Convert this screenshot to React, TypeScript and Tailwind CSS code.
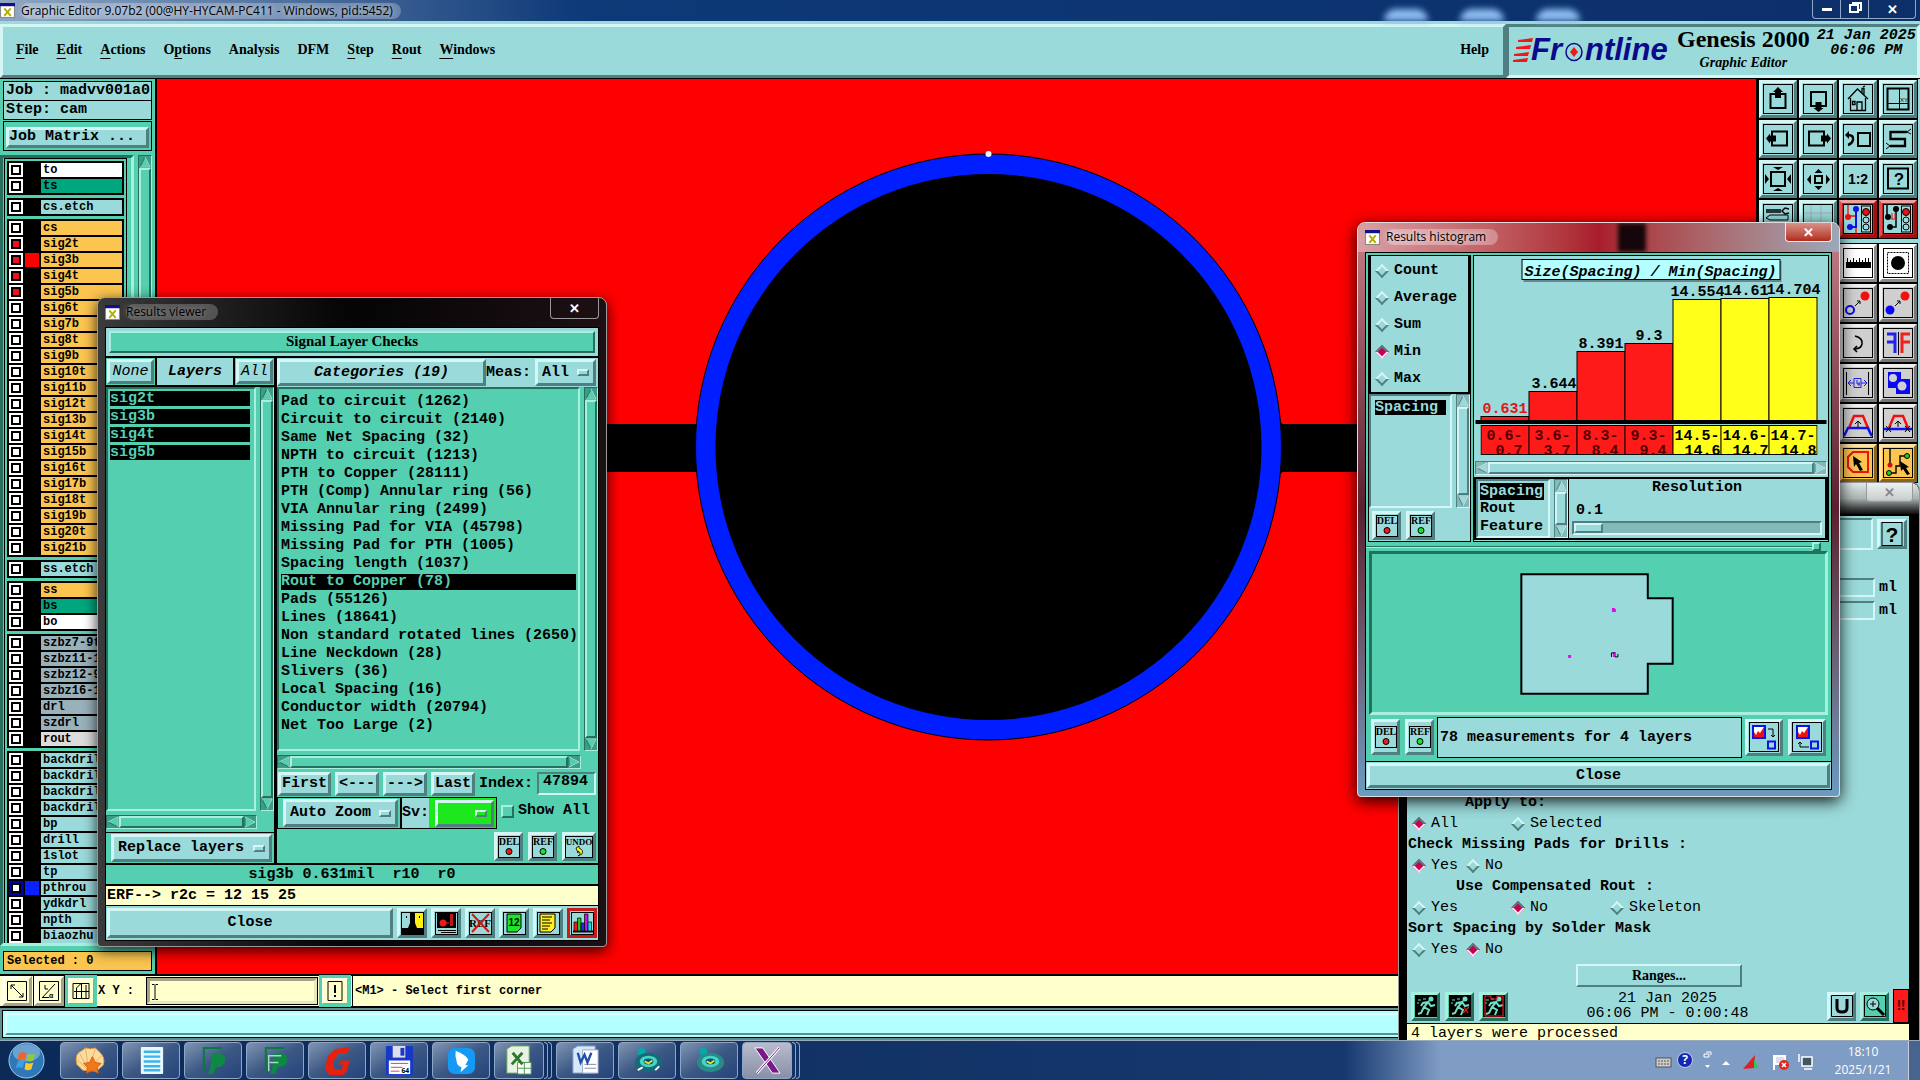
import type { ReactNode } from "react";

const MONO = "font-['Liberation_Mono',monospace]";
const SERIF = "font-['Liberation_Serif',serif]";
const UI = "font-['Open_Sans',sans-serif]";

// Motif style bevels
const UP = "border-t-[#d4f6f4] border-l-[#d4f6f4] border-b-[#4f7f80] border-r-[#4f7f80]";
const DOWN = "border-t-[#4f7f80] border-l-[#4f7f80] border-b-[#d4f6f4] border-r-[#d4f6f4]";
const GREEN_UP = "border-t-[#a9efdd] border-l-[#a9efdd] border-b-[#24705d] border-r-[#24705d]";
const GREEN_DOWN = "border-t-[#24705d] border-l-[#24705d] border-b-[#a9efdd] border-r-[#a9efdd]";

type Tone = "green" | "cyan";

function Arrow({ d, tone }: { d: "up" | "down" | "left" | "right"; tone: Tone }) {
  const points = { up: "6,1 11,11 1,11", down: "1,1 11,1 6,11", left: "1,6 11,1 11,11", right: "1,1 11,6 1,11" };
  return (
    <svg viewBox="0 0 12 12" className="size-3 shrink-0">
      <polygon points={points[d]} fill={tone === "green" ? "#54cfb0" : "#9bdada"} stroke={tone === "green" ? "#24705d" : "#4f7f80"} />
      <polyline points={points[d]} fill="none" stroke={tone === "green" ? "#a9efdd" : "#d4f6f4"} />
    </svg>
  );
}

function ScrollBar({ vertical, tone = "green", className = "" }: { vertical?: boolean; tone?: Tone; className?: string }) {
  const trough = tone === "green" ? `bg-[#3a9e86] ${GREEN_DOWN}` : `bg-[#84b9b9] ${DOWN}`;
  const thumb = tone === "green" ? `bg-[#54cfb0] ${GREEN_UP}` : `bg-[#9bdada] ${UP}`;
  return (
    <div className={`flex shrink-0 border ${trough} ${vertical ? "w-[14px] flex-col" : "h-[14px]"} ${className}`}>
      <Arrow d={vertical ? "up" : "left"} tone={tone} />
      <div className={`flex-1 border-2 ${thumb}`}></div>
      <Arrow d={vertical ? "down" : "right"} tone={tone} />
    </div>
  );
}

function Diamond({ name, label, checked, className = "" }: { name: string; label: string; checked?: boolean; className?: string }) {
  return (
    <label className={`flex items-center gap-[7px] ${className}`}>
      <input
        type="radio"
        name={name}
        defaultChecked={checked}
        className="size-[10px] shrink-0 rotate-45 appearance-none border-2 border-t-[#d4f6f4] border-l-[#d4f6f4] border-b-[#4f7f80] border-r-[#4f7f80] checked:border-t-[#4f7f80] checked:border-l-[#4f7f80] checked:border-b-[#f4e8f8] checked:border-r-[#f4e8f8] checked:bg-[#c8004f]"
      />
      {label}
    </label>
  );
}

function Option({ label, name, className = "" }: { label: string; name: string; className?: string }) {
  return (
    <span className={`flex items-center border-[3px] px-1 ${UP} ${className}`}>
      <select aria-label={name} className="min-w-0 flex-1 appearance-none bg-transparent font-bold">
        <option>{label}</option>
      </select>
      <span className={`h-[7px] w-3 shrink-0 border-2 ${UP}`}></span>
    </span>
  );
}

function XIcon() {
  return (
    <svg viewBox="0 0 14 14" className="size-[15px] shrink-0">
      <rect x="0.5" y="0.5" width="13" height="13" fill="#fff" stroke="#888" />
      <rect x="0" y="0" width="14" height="3" fill="#10108a" />
      <path d="M4 5l6 7M10 5l-6 7" stroke="#b5ae00" strokeWidth="1.8" />
    </svg>
  );
}

// Small bevelled button with a word above a coloured lamp
function LampButton({ word, fill, tall }: { word: string; fill?: string; tall?: boolean }) {
  return (
    <button aria-label={word} className={`flex items-center justify-center border-[3px] bg-[#9bdada] ${UP} ${word === "UNDO" ? "w-[34px]" : "w-[29px]"} ${tall ? "h-9" : "h-[29px]"}`}>
      <svg viewBox="0 0 22 22" className="size-[22px] overflow-visible">
        <rect x={fill ? 0.5 : -2.5} y="0.5" width={fill ? 21 : 27} height="21" fill="none" stroke="#000" />
        <text x="11" y="9" fontSize={fill ? 10 : 9} textAnchor="middle" fontFamily="Liberation Serif">{word}</text>
        {fill ? (
          <circle cx="11" cy="15.5" r="3" fill={fill} stroke="#000" />
        ) : (
          <path d="M8 12l3-2v2q5 2 3 6l-4 2q4-3 0-5v2z" fill="#ffee20" stroke="#000" strokeWidth="0.8" />
        )}
      </svg>
    </button>
  );
}

function Pic({ children, fill = "none" }: { children?: ReactNode; fill?: string }) {
  return (
    <svg viewBox="0 0 30 30" className="size-[30px]">
      <rect x="0.5" y="0.5" width="29" height="29" fill={fill} stroke="#000" />
      {children}
    </svg>
  );
}

const navTools: [string, ReactNode][] = [
  ["Pan up", <Pic><rect x="7.5" y="10" width="15" height="14" fill="none" stroke="#000" strokeWidth="2" /><path d="M15 3l5 5h-2v6h-6V8h-2z" /></Pic>],
  ["Pan down", <Pic><rect x="8" y="8" width="15" height="14" fill="none" stroke="#000" strokeWidth="2" /><path d="M15.500 28l5-4h-2v-6h-6v6h-2z" /></Pic>],
  ["Home", <Pic><path d="M5 15L14.500 5 25 15M7.500 14v12.500h15V14M14 26v-8h5v8M9.500 17.500h2.500v3h-2.500zM19 9V4.500h2v6M20 3l2-1" fill="none" stroke="#000" strokeWidth="1.300" /></Pic>],
  ["Zoom window", <Pic><rect x="4.500" y="4.500" width="21" height="21" fill="none" stroke="#000" strokeWidth="2" /><path d="M16.500 5v20M5 19.500h20" stroke="#000" /><text x="17" y="18" fontSize="6" fontFamily="Liberation Sans">XY</text></Pic>],
  ["Pan left", <Pic><rect x="9" y="7.500" width="15" height="14" fill="none" stroke="#000" strokeWidth="2" /><path d="M3 14.500l4-5v2h6v6H7v2z" /></Pic>],
  ["Pan right", <Pic><rect x="6" y="7.500" width="15" height="14" fill="none" stroke="#000" strokeWidth="2" /><path d="M28 14.500l-4-5v2h-6v6h6v2z" /></Pic>],
  ["Previous view", <Pic><rect x="15" y="9" width="12" height="13" fill="none" stroke="#000" strokeWidth="2" /><path d="M5 11q6 0 5 5-1 4-5 5" fill="none" stroke="#000" strokeWidth="2.500" /><path d="M2 11l4-4v8z" /></Pic>],
  ["Net path", <Pic><path d="M24 8H7.500v7H22v7H7" fill="none" stroke="#000" strokeWidth="2.300" /><path d="M24 8l4-3m-4 3l4 2M7 22l-4-3m4 3l-4 3" stroke="#000" /></Pic>],
  ["Zoom out", <Pic><rect x="8" y="8" width="14" height="14" fill="none" stroke="#000" strokeWidth="2" /><path d="M15 6l-5-3h10zM15 24l-5 3h10zM6 15l-4-5v10zM24 15l4-5v10z" /></Pic>],
  ["Zoom in", <Pic><rect x="12" y="12" width="7" height="7" fill="none" stroke="#000" strokeWidth="2" /><path d="M15.500 5l-4 4h8zM15.500 26l-4-4h8zM4 15.500l4-5v10zM27 15.500l-4-5v10z" /></Pic>],
  ["Scale", <Pic><text x="15" y="20" fontSize="14" fontWeight="bold" textAnchor="middle" fontFamily="Liberation Sans">1:2</text></Pic>],
  ["Query", <Pic><rect x="5" y="4.500" width="20" height="20" fill="none" stroke="#000" strokeWidth="2" /><text x="16" y="21" fontSize="17" fontWeight="bold" textAnchor="middle" fontFamily="Liberation Sans">?</text></Pic>],
  ["Setup", <Pic><path d="M3 6h15M3 8h15M26 5l-4-1-3 3 3 3 4-1" fill="none" stroke="#000" strokeWidth="1.500" /><path d="M3 14l4-3h18v5H7z" fill="none" stroke="#000" /></Pic>],
  ["Grid", <Pic><path d="M8 1v28M18 1v28M1 9h28M1 19h28" stroke="#a9a9b5" /></Pic>],
  ["Net on", <Pic><path d="M5 1v11h8v17" fill="none" stroke="#f01010" strokeWidth="1.300" /><path d="M13 5v18H8" fill="none" stroke="#1010e8" strokeWidth="2" /><circle cx="13" cy="5" r="3" fill="#1010e8" /><circle cx="5" cy="13" r="3" fill="#f01010" /><circle cx="7" cy="23" r="3" fill="#1010e8" /><rect x="18.500" y="2" width="9" height="26" fill="#9bdada" stroke="#000" /><circle cx="23" cy="8" r="3.500" fill="#f01010" stroke="#000" /><circle cx="23" cy="16" r="3" fill="none" stroke="#000" /><circle cx="23" cy="23" r="3" fill="none" stroke="#000" /></Pic>],
  ["Net off", <Pic><path d="M4 1v12M13 5v18H8" fill="none" stroke="#000" strokeWidth="1.500" /><circle cx="13" cy="5" r="3" /><circle cx="5" cy="13" r="3" /><circle cx="7" cy="23" r="3" /><path d="M9 9v6m3-6v6m-4 0h5" stroke="#f01010" /><rect x="18.500" y="2" width="9" height="26" fill="#9bdada" stroke="#000" /><circle cx="23" cy="8" r="3.500" fill="#f01010" stroke="#000" /><circle cx="23" cy="16" r="3" fill="none" stroke="#000" /><circle cx="23" cy="23" r="3" fill="none" stroke="#000" /></Pic>],
];

const editTools: [string, string, ReactNode][] = [
  ["Measure", "white", <Pic fill="#fff"><path d="M3 14h25v6H3z" /><path d="M4.500 10v5M7.500 12v3M10.500 10v5M13.500 12v3M16.500 10v5M19.500 12v3M22.500 10v5M25.500 10v5" stroke="#000" /></Pic>],
  ["Select feature", "white", <Pic fill="#fff"><rect x="4.500" y="4.500" width="21" height="21" fill="none" stroke="#000" strokeDasharray="2 1" /><circle cx="15" cy="15" r="7" /></Pic>],
  ["Copy feature", "gray", <Pic><circle cx="7" cy="22" r="4" fill="none" stroke="#0a0af0" strokeWidth="2" /><circle cx="22" cy="8" r="4.500" fill="#f01010" /><path d="M12 18l5-5m-3 0h3v3" fill="none" stroke="#000" /></Pic>],
  ["Move feature", "gray", <Pic><circle cx="7" cy="22" r="4.500" fill="#0a0af0" /><circle cx="22" cy="8" r="4.500" fill="#f01010" /><path d="M12 18l5-5m-3 0h3v3" fill="none" stroke="#000" /></Pic>],
  ["Rotate", "gray", <Pic><path d="M12 8q8 2 7 8-1 5-8 5m3-3l-3 3 3 3" fill="none" stroke="#000" strokeWidth="1.600" /></Pic>],
  ["Mirror", "gray", <Pic><path d="M4 6h8v19M4 14h8" fill="none" stroke="#2020f0" strokeWidth="3" /><path d="M27 6h-8v19M27 14h-8" fill="none" stroke="#f02020" strokeWidth="3" /><path d="M15.500 4v23" stroke="#000" /></Pic>],
  ["Stretch", "gray", <Pic><path d="M3.500 4v23M25.500 4v23" stroke="#000" /><path d="M5 15h6M24 15h-6M8 12l-3 3 3 3M21 12l3 3-3 3M11 10.500h7v9h-7zM14 12v4h3m-1-2v4" fill="none" stroke="#2020e0" /></Pic>],
  ["Combine", "gray", <Pic><path d="M5 4h13v7h9v15H13v-6H5z" fill="#0a0af0" /><circle cx="10" cy="10" r="4" fill="#d0d0d0" /><circle cx="19" cy="18" r="4.500" fill="#d0d0d0" /></Pic>],
  ["Widen", "gray", <Pic><path d="M6 20L11 8h9l5 12" fill="none" stroke="#f01010" strokeWidth="2.500" /><path d="M1 28q3-6 4-8h20q1 3 4 8" fill="none" stroke="#1010f0" strokeWidth="2.500" /><path d="M15 19v-6m-3 3l3-3 3 3" fill="none" stroke="#000" /></Pic>],
  ["Narrow", "gray", <Pic><path d="M6 20L11 8h9l5 12" fill="none" stroke="#f01010" strokeWidth="2.500" /><path d="M1 21h28" stroke="#1010f0" strokeWidth="2.500" /><path d="M15 19v-6m-3 3l3-3 3 3M3 18l5 6m0-6l-5 6M22 18l5 6m0-6l-5 6" fill="none" stroke="#000" /></Pic>],
  ["Select polygon", "orange", <Pic><path d="M10 4h15v20H10l-5-5V9z" fill="none" stroke="#f01010" strokeWidth="2" /><path d="M10 8l9 6-3 1 4 7-3 1-4-7-2 3z" /></Pic>],
  ["Select net", "orange", <Pic><path d="M7 1v15M6 25h7v-7h4V8h8" fill="none" stroke="#000" strokeWidth="1.400" /><circle cx="7" cy="17" r="2.500" fill="#d01010" /><circle cx="6" cy="25" r="2.500" fill="#20d020" stroke="#000" /><circle cx="24" cy="8" r="2.500" fill="#20d020" stroke="#000" /><path d="M17 13l9 6-3 1 4 6-3 1-4-6-2 2z" /></Pic>],
];

const toolColors: Record<string, string> = {
  white: "bg-white border-t-white border-l-white border-b-[#8a8a8a] border-r-[#8a8a8a]",
  gray: "bg-[#cfcfcf] border-t-[#efefef] border-l-[#efefef] border-b-[#777] border-r-[#777]",
  orange: "bg-[#fcc54f] border-t-[#ffe3a0] border-l-[#ffe3a0] border-b-[#8a6416] border-r-[#8a6416]",
};

const layerColors: Record<string, string> = {
  white: "bg-white",
  mask: "bg-[#00a67d]",
  misc: "bg-[#9bdada]",
  signal: "bg-[#fcc54f]",
  drill: "bg-[#98b1ba]",
  rout: "bg-[#dcdcdc]",
};

const inner = Array.from({ length: 20 }, (_, i) => `sig${i + 2}${i % 2 ? "b" : "t"}:signal`);

const layerGroups = [
  ["to:white", "ts:mask"],
  ["cs.etch:misc"],
  ["cs:signal", ...inner],
  ["ss.etch:misc"],
  ["ss:signal", "bs:mask", "bo:white"],
  ["szbz7-9t:drill", "szbz11-1:drill", "szbz12-9:drill", "szbz16-1:drill", "drl:drill", "szdrl:drill", "rout:rout"],
  ["backdril:misc", "backdril:misc", "backdril:misc", "backdril:misc", "bp:misc", "drill:misc", "1slot:misc", "tp:misc", "pthrou:misc", "ydkdrl:misc", "npth:misc", "biaozhu:misc", "ddd:misc"],
];

function LayerRow({ item }: { item: string }) {
  const [name, kind] = item.split(":");
  const affected = ["sig2t", "sig3b", "sig4t", "sig5b"].includes(name);
  const swatch = name === "sig3b" ? "bg-[#ff0000]" : name === "pthrou" ? "bg-[#0a20ff]" : "bg-black";
  return (
    <label className="mb-0.5 flex h-3.5 items-center">
      <span className={`flex size-3.5 items-center justify-center ${name === "pthrou" ? "bg-[#0000a8]" : "bg-white"}`}>
        <input type="checkbox" defaultChecked={affected} className="size-2.5 appearance-none border-2 border-black bg-white checked:bg-[#f01018]" />
      </span>
      <span className={`ml-0.5 h-3.5 w-[14px] ${swatch}`}></span>
      <span className={`ml-0.5 h-3.5 flex-1 overflow-hidden whitespace-nowrap pl-0.5 leading-[14px] ${layerColors[kind]}`}>{name}</span>
    </label>
  );
}

function Sidebar() {
  return (
    <aside className={`flex w-[157px] shrink-0 flex-col border-r-2 border-black bg-[#54cfb0] font-bold ${MONO}`}>
      <div className="mx-[3px] mt-0.5 h-5 border border-black bg-[#9bdada] pl-0.5 text-[15px] leading-[18px]">Job : madvv001a0</div>
      <div className="mx-[3px] h-[19px] border border-t-0 border-black bg-[#9bdada] pl-0.5 text-[15px] leading-[18px]">Step: cam</div>
      <div className="mx-[3px] mt-px border border-black p-0.5">
        <button className={`h-[21px] w-full border-[3px] bg-[#9bdada] text-left text-[15px] leading-[14px] ${UP}`}>Job Matrix ...</button>
      </div>
      <div className="mt-1 flex min-h-0 flex-1 gap-1 overflow-hidden pr-[3px]">
        <div className={`flex-1 overflow-hidden border-[3px] pl-px pr-1 ${GREEN_DOWN}`}>
          <div className="flex flex-col gap-[3px] border border-black px-0.5 pt-0.5 text-[12px]">
            {layerGroups.map((group, g) => (
              <div key={g} className="bg-black px-0.5 pt-0.5">
                {group.map((item, i) => (
                  <LayerRow key={i} item={item} />
                ))}
              </div>
            ))}
          </div>
        </div>
        <ScrollBar vertical />
      </div>
      <div className="mx-[3px] mb-[3px] mt-[5px] h-5 border border-black bg-[#fcc54f] pl-[3px] text-[12px] leading-[18px]">Selected : 0</div>
    </aside>
  );
}

const menus = [
  ["", "F", "ile"], ["", "E", "dit"], ["", "A", "ctions"], ["O", "p", "tions"], ["Analysis", "", ""],
  ["DFM", "", ""], ["", "S", "tep"], ["", "R", "out"], ["", "W", "indows"],
];

function Header() {
  return (
    <header className="flex h-[57px] shrink-0 border-b border-black bg-[#9bdada] pt-0.5">
      <nav className={`flex flex-1 items-center border-[3px] pb-1 pl-[13px] pr-[14px] text-[14px] font-bold ${UP} ${SERIF}`}>
        <div className="flex gap-[18px]">
          {menus.map(([a, b, c]) => (
            <button key={a + b + c}>
              {a}
              <span className="underline underline-offset-4">{b}</span>
              {c}
            </button>
          ))}
        </div>
        <button className="ml-auto">Help</button>
      </nav>
      <div className={`flex w-[414px] items-center border-[3px] pb-1 pl-1 ${DOWN}`}>
        <svg viewBox="0 0 160 32" className="h-8 w-40 shrink-0 overflow-visible">
          <path d="M5 7l15-2-1 4H5zM3 14l15-2-1 4H3zM1 21l15-2-1 4H1zM0 27l15-2-1 4H0z" fill="#f01818" />
          <text x="18" y="27" fontSize="31" fontWeight="bold" fontStyle="italic" fill="#0a0a8a" fontFamily="Liberation Sans">Fr</text>
          <ellipse cx="61" cy="19" rx="8" ry="8.500" fill="none" stroke="#0a0a8a" strokeWidth="1.500" />
          <path d="M61 14l4 5-4 5-4-5z" fill="#f01818" />
          <text x="72" y="27" fontSize="31" fontWeight="bold" fontStyle="italic" fill="#0a0a8a" fontFamily="Liberation Sans">ntline</text>
        </svg>
        <div className={`shrink-0 text-center font-bold ${SERIF}`}>
          <div className="px-1 text-[24px] leading-[28px]">Genesis 2000</div>
          <div className="text-[14px] italic leading-[20px]">Graphic Editor</div>
        </div>
        <time className={`mb-3 ml-[3px] shrink-0 text-center text-[15px] font-bold italic leading-[15px] ${MONO}`}>
          21 Jan 2025
          <br />
          06:06 PM
        </time>
      </div>
    </header>
  );
}

function Toolbar() {
  return (
    <aside className="w-[164px] shrink-0 border-l-2 border-black bg-[#9bdada] pr-0.5">
      <div className="grid grid-cols-4 gap-0.5 bg-black p-px">
        {navTools.map(([name, pic], i) => (
          <button
            key={name}
            aria-label={name}
            className={`flex h-[38px] items-center justify-center border-[3px] ${i > 13 ? "border-t-[#f0a0a0] border-l-[#e05050] border-b-[#a01010] border-r-[#a01010] bg-[#c81c1c]" : `bg-[#9bdada] ${UP}`}`}
          >
            <span className="bg-[#9bdada]">{pic}</span>
          </button>
        ))}
      </div>
      <div className="ml-auto mt-1 grid w-20 grid-cols-2 gap-0.5 bg-black p-px">
        {editTools.map(([name, tone, pic]) => (
          <button key={name} aria-label={name} className={`flex h-[38px] items-center justify-center border-[3px] ${toolColors[tone]}`}>
            {pic}
          </button>
        ))}
      </div>
    </aside>
  );
}

function Canvas() {
  return (
    <svg viewBox="0 0 1600 895" preserveAspectRatio="xMidYMid slice" className="h-full min-w-0 flex-1 bg-[#ff0000]">
      <path d="M0 345h539l3-3v54l-3-3H0zM1600 345h-474l-3-3v54l3-3h474z" />
      <circle cx="832" cy="368" r="293" fill="#001eff" stroke="#000" />
      <circle cx="832" cy="368" r="273" />
      <circle cx="832" cy="75" r="3" fill="#e8fff0" />
    </svg>
  );
}

function PromptBar() {
  const btn = "flex w-[30px] items-center justify-center border-[3px] border-t-[#ffffee] border-l-[#ffffee] border-b-[#a3a38a] border-r-[#a3a38a] bg-[#ffffcc]";
  return (
    <div className={`flex h-[34px] shrink-0 gap-0.5 border-y-2 border-black bg-[#ffffcc] pl-0.5 text-[12px] font-bold ${MONO}`}>
      <button aria-label="Diagonal" className={btn}>
        <svg viewBox="0 0 20 20" className="size-5"><path d="M.5.500h19v19H.5zM4 4l12 12M4 8V4h4M16 12v4h-4" fill="none" stroke="#000" /></svg>
      </button>
      <button aria-label="Angle" className={`${btn} outline outline-black`}>
        <svg viewBox="0 0 20 20" className="size-5"><path d="M.5.500h19v19H.5zM3 17L16 3M3 16.500h7M6 4v4h3" fill="none" stroke="#000" /><text x="10" y="17" fontSize="7">α</text></svg>
      </button>
      <button aria-label="Snap grid" className={`${btn} outline-3 -outline-offset-2 outline-[#54cfb0]`}>
        <svg viewBox="0 0 20 20" className="size-5"><path d="M2 2.500h16v15H2zM5.500 17V7l4-4M10.500 3v14M3 10.500h15M15 4v13" fill="none" stroke="#000" /></svg>
      </button>
      <label htmlFor="xy" className="flex w-[46px] items-center whitespace-pre">X Y :</label>
      <div className="relative my-px flex w-[172px] border border-black">
        <input id="xy" className="w-full border-[3px] border-t-[#a3a38a] border-l-[#a3a38a] border-b-[#e8e8c0] border-r-[#e8e8c0] bg-[#ffffcc] pl-1" />
        <svg viewBox="0 0 8 16" className="absolute left-1 top-1.5 h-4 w-2"><path d="M1 .5h2.500M4.500.500H7M4 1v14M1 15.500h2.500M4.500 15.500H7" stroke="#000" fill="none" /></svg>
      </div>
      <button aria-label="Alert" className={`${btn} outline-3 -outline-offset-2 outline-[#54cfb0]`}>
        <svg viewBox="0 0 20 20" className="size-5"><path d="M3 .5h14v19H3z" fill="none" stroke="#000" /><path d="M10 4v8M10 14v2" stroke="#000" strokeWidth="2" /></svg>
      </button>
      <p className="border-l border-black pl-0.5 leading-[31px]">&lt;M1&gt; - Select first corner</p>
    </div>
  );
}

const categories = [
  "Pad to circuit (1262)", "Circuit to circuit (2140)", "Same Net Spacing (32)", "NPTH to circuit (1213)", "PTH to Copper (28111)",
  "PTH (Comp) Annular ring (56)", "VIA Annular ring (2499)", "Missing Pad for VIA (45798)", "Missing Pad for PTH (1005)",
  "Spacing length (1037)", "Rout to Copper (78)", "Pads (55126)", "Lines (18641)", "Non standard rotated lines (2650)",
  "Line Neckdown (28)", "Slivers (36)", "Local Spacing (16)", "Conductor width (20794)", "Net Too Large (2)",
];

const viewerIcons: [string, ReactNode][] = [
  ["Compare", <><rect x="1" y="1" width="21" height="21" fill="#9bdada" /><rect x="14" y="1" width="8" height="15" fill="#ffee10" /><path d="M9 1h5v10l2 5h6v6H1v-6h6l2-5z" /><path d="M5.500 4v2M18.500 4v2" stroke="#000" /></>],
  ["Snapshot", <><rect x="2" y="1" width="19" height="15" /><circle cx="8" cy="11" r="3.500" fill="#f01818" /><path d="M11 11h3" stroke="#c01818" strokeWidth="1.500" /><path d="M16.500 2v12" stroke="#c01818" strokeWidth="3" /><path d="M3 18.500h18M6 20.500h15" stroke="#000" /></>],
  ["Clear references", <><text x="11" y="15" fontSize="11" textAnchor="middle" fontFamily="Liberation Serif">REF</text><path d="M3 2l17 18M20 2L3 20" stroke="#d01818" strokeWidth="2" /></>],
  ["Numbers", <><path d="M4 2h14v14l-4 4H4z" fill="#18e828" stroke="#000" /><text x="11" y="14" fontSize="10" fontWeight="bold" textAnchor="middle" fontFamily="Liberation Sans">12</text></>],
  ["Report", <><path d="M3 2h15v14l-4 4H3z" fill="#ffee20" stroke="#000" /><path d="M5 5h10M5 8h8M5 11h10M5 14h8M5 17h6" stroke="#000" /></>],
  ["Histogram", <g stroke="#000" strokeWidth="0.7"><path d="M2 19.500h20" strokeWidth="2" /><path d="M3 19v-9h3.500v9z" fill="#f01818" /><path d="M6.500 19V6H10v13z" fill="#18c828" /><path d="M10 19v-8h3.500v8z" fill="#2828f0" /><path d="M13.500 19V2H17v17z" fill="#c018e8" /><path d="M17 19v-9h3.500v9z" fill="#18d8e8" /></g>],
];

function ResultsViewer() {
  return (
    <section className="absolute left-[97px] top-[297px] w-[510px] rounded-t-lg rounded-b border border-[#9a9a9a] bg-linear-to-r from-[#3b3b3b] via-[#050505] to-[#1d1014] px-[7px] pb-[5px] shadow-[0_4px_14px_rgba(0,0,0,0.8)]">
      <div className={`flex h-[29px] items-start text-[12px] ${UI}`}>
        <span className="mt-1.5 flex items-center gap-1.5"><XIcon /><span className="rounded-full bg-[#777]/60 pr-3 leading-4 text-black [text-shadow:0_0_6px_#aaa]">Results viewer</span></span>
        <button aria-label="Close window" className="ml-auto h-[21px] w-[49px] rounded-b border border-t-0 border-[#999] text-[13px] font-bold leading-[18px] text-white">✕</button>
      </div>
      <div className={`border border-black bg-[#54cfb0] text-[15px] font-bold leading-[18px] ${MONO}`}>
        <div className="h-[30px] border-b-2 border-black bg-[#9bdada] p-[3px]">
          <h2 className={`h-[22px] border-2 bg-[#54cfb0] text-center text-[15px] leading-[17px] ${GREEN_UP} ${SERIF}`}>Signal Layer Checks</h2>
        </div>
        <div className="flex h-[507px] border-b-2 border-black">
          <div className="flex w-[171px] shrink-0 flex-col border-r-[3px] border-black">
            <div className="flex h-[29px] border-b-2 border-black">
              <button className={`m-px w-[47px] border-[3px] bg-[#9bdada] text-center font-normal italic leading-[20px] ${UP}`}>None</button>
              <div className="flex-1 border-x-2 border-black bg-[#9bdada] text-center italic leading-[28px]">Layers</div>
              <button className={`m-px w-[37px] border-[3px] bg-[#9bdada] font-normal italic leading-[20px] ${UP}`}>All</button>
            </div>
            <div className="flex min-h-0 flex-1 gap-1">
              <ul className={`flex-1 space-y-[3px] border-2 pl-0.5 pr-1 pt-0.5 ${GREEN_DOWN}`}>
                {["sig2t", "sig3b", "sig4t", "sig5b"].map((name) => (
                  <li key={name} className="h-[15px] bg-black leading-[15px] text-[#54cfb0]">{name}</li>
                ))}
              </ul>
              <ScrollBar vertical />
            </div>
            <ScrollBar className="mr-[17px] mt-1" />
            <div className="mt-[3px] border-t border-black py-px pl-[5px] pr-0.5">
              <Option name="Replace layers" label="Replace layers" className="h-7 bg-[#9bdada]" />
            </div>
          </div>
          <div className="flex min-w-0 flex-1 flex-col">
            <div className="flex h-[29px] items-center bg-[#9bdada]">
              <button className={`h-[27px] w-[209px] border-[3px] bg-[#9bdada] italic ${UP}`}>Categories (19)</button>
              <span className="flex-1">Meas:</span>
              <Option name="Measurement" label="All" className="mr-0.5 h-[27px] w-[61px]" />
            </div>
            <div className="flex h-[364px] gap-1">
              <ul className={`min-w-0 flex-1 overflow-hidden whitespace-nowrap border-2 px-0.5 pt-1 ${GREEN_DOWN}`}>
                {categories.map((c) => (
                  <li key={c} className="h-[18px] overflow-hidden py-px">
                    <span className={`block h-4 leading-4 ${c.startsWith("Rout") ? "bg-black text-[#54cfb0]" : ""}`}>{c}</span>
                  </li>
                ))}
              </ul>
              <ScrollBar vertical />
            </div>
            <ScrollBar className="mr-[17px] mt-1" />
            <div className="mt-0.5 flex h-[25px] items-center gap-1 pl-px">
              <button className={`h-6 w-[53px] border-[3px] bg-[#9bdada] leading-[18px] ${UP}`}>First</button>
              <button className={`h-6 w-[44px] border-[3px] bg-[#9bdada] leading-[18px] ${UP}`}>&lt;---</button>
              <button className={`h-6 w-[44px] border-[3px] bg-[#9bdada] leading-[18px] ${UP}`}>---&gt;</button>
              <button className={`h-6 w-[44px] border-[3px] bg-[#9bdada] leading-[18px] ${UP}`}>Last</button>
              <label htmlFor="index">Index:</label>
              <input id="index" defaultValue="47894" className={`h-[23px] w-[59px] border-2 bg-[#54cfb0] pb-1 pl-1 font-bold ${DOWN}`} />
            </div>
            <div className="mt-px flex h-8 shrink-0 items-center">
              <div className="h-8 w-[124px] border border-black py-px pl-[5px] pr-0.5">
                <Option name="Zoom mode" label="Auto Zoom" className="h-7 bg-[#9bdada]" />
              </div>
              <div className="flex h-8 w-24 items-center border border-black bg-[#1de81d]">
                <span className="h-full bg-[#9bdada] leading-[30px]">Sv:</span>
                <Option name="Severity" label="" className="ml-1.5 mr-0.5 h-[27px] flex-1" />
              </div>
              <label className="mb-1 ml-1 flex items-center gap-1">
                <input type="checkbox" className={`size-[13px] appearance-none border-2 ${GREEN_UP}`} />
                Show All
              </label>
            </div>
            <div className="flex items-center justify-end gap-[5px] pr-0.5 pt-[3px]">
              <LampButton word="DEL" fill="#f01818" />
              <LampButton word="REF" fill="#18e828" />
              <LampButton word="UNDO" />
            </div>
          </div>
        </div>
        <p className="h-[21px] whitespace-pre border-b-2 border-black text-center leading-5">{"sig3b 0.631mil  r10  r0"}</p>
        <p className="h-5 border-b border-black bg-[#ffffcc] pl-px leading-5">ERF--&gt; r2c = 12 15 25</p>
        <div className="flex h-[34px] items-center gap-1 bg-[#9bdada] px-px">
          <button className={`h-[30px] flex-1 border-[3px] ${UP}`}>Close</button>
          {viewerIcons.map(([name, pic]) => (
            <button key={name} aria-label={name} className={`flex size-[30px] items-center justify-center border-[3px] ${name === "Histogram" ? "border-[#c81c1c]" : UP}`}>
              <svg viewBox="0 0 23 23" className="size-[23px]">
                {pic}
                <rect x="0.5" y="0.5" width="22" height="22" fill="none" stroke="#000" />
              </svg>
            </button>
          ))}
        </div>
      </div>
    </section>
  );
}

const bars = [
  { value: "0.631", x: 7, top: 160, from: "0.6-", to: "0.7" },
  { value: "3.644", x: 56, top: 135, from: "3.6-", to: "3.7" },
  { value: "8.391", x: 103, top: 95, from: "8.3-", to: "8.4" },
  { value: "9.3", x: 160, top: 87, from: "9.3-", to: "9.4" },
  { value: "14.554", x: 195, top: 43, from: "14.5-", to: "14.6" },
  { value: "14.61", x: 248, top: 42, from: "14.6-", to: "14.7" },
  { value: "14.704", x: 291, top: 41, from: "14.7-", to: "14.8" },
];

function Chart() {
  return (
    <svg viewBox="0 0 351 205" className="h-[205px] w-full" fontFamily="Liberation Mono" fontSize="15" fontWeight="bold">
      <rect x="48" y="5" width="258" height="21" fill="#688" />
      <rect x="46.5" y="3.5" width="258" height="20" fill="#b4ffff" stroke="#000" />
      <text x="49" y="20" fontStyle="italic">Size(Spacing) / Min(Spacing)</text>
      {bars.map((b, i) => (
        <g key={b.value}>
          <rect x={5.5 + i * 48} y={b.top + 0.5} width="48" height={166 - b.top} fill={i < 4 ? "#ff1a1a" : "#ffff1a"} stroke="#000" />
          <text x={b.x} y={b.top - 3} fill={i ? "#000" : "#e01818"}>{b.value}</text>
          <svg x={5 + i * 48} y="169" width="49" height="30">
            <rect x="0.5" y="0.5" width="48" height="29" fill={i < 4 ? "#ff1a1a" : "#ffff1a"} stroke="#000" />
            <text x={i < 4 ? 6 : 2} y="15" fill={i < 4 ? "#500" : "#000"}>{b.from}</text>
            <text x={i < 4 ? 15 : 12} y="30" fill={i < 4 ? "#500" : "#000"}>{b.to}</text>
          </svg>
        </g>
      ))}
      <rect y="164" width="351" height="4" />
    </svg>
  );
}

function ResultsHistogram() {
  return (
    <section className="absolute right-[80px] top-[222px] z-20 w-[483px] rounded-t-lg rounded-b border border-[#ddd] bg-linear-to-b from-[#c8808a] via-[#5a2030] to-[#6a9cc0] px-[7px] pb-1.5 shadow-[0_4px_16px_rgba(0,0,0,0.9)]">
      <div className={`-mx-[7px] flex h-[29px] items-start overflow-hidden rounded-t-lg bg-linear-to-r from-[#d8a0a8] via-[#a81c2c] to-[#9aa8b8] px-[7px] text-[12px] ${UI}`}>
        <span className="mt-1.5 flex items-center gap-1.5"><XIcon /><span className="rounded-full bg-white/30 pr-3 leading-4 [text-shadow:0_0_6px_#fff]">Results histogram</span></span>
        <span className="ml-[120px] h-[29px] w-7 bg-[#14060a] blur-[2px]"></span>
        <button aria-label="Close window" className="ml-auto h-[19px] w-[47px] rounded-b border border-t-0 border-[#eee] bg-linear-to-b from-[#d89088] to-[#b02a1c] text-[13px] font-bold leading-[17px] text-white">✕</button>
      </div>
      <div className={`border border-black bg-[#54cfb0] text-[15px] font-bold leading-[18px] ${MONO}`}>
        <div className="flex h-[289px] gap-0.5 px-0.5 pt-0.5">
          <div className="flex w-[103px] shrink-0 flex-col border border-black bg-[#9bdada]">
            <div className="flex h-[138px] shrink-0 flex-col gap-[9px] border-2 border-t-0 border-black pl-1.5 pt-1.5">
              <Diamond name="stat" label="Count" />
              <Diamond name="stat" label="Average" />
              <Diamond name="stat" label="Sum" />
              <Diamond name="stat" label="Min" checked />
              <Diamond name="stat" label="Max" />
            </div>
            <div className="flex h-[114px] shrink-0 gap-1">
              <div className={`flex-1 border-2 px-1 pt-1 ${DOWN}`}>
                <span className="block h-[15px] bg-black leading-[15px] text-[#9bdada]">Spacing</span>
              </div>
              <ScrollBar vertical tone="cyan" />
            </div>
            <div className="flex gap-[5px] pl-[3px] pt-[3px]">
              <LampButton word="DEL" fill="#f01818" />
              <LampButton word="REF" fill="#18e828" />
            </div>
          </div>
          <div className="min-w-0 flex-1 border border-black bg-[#9bdada]">
            <Chart />
            <ScrollBar tone="cyan" className="mx-px" />
            <div className="mt-0.5 flex h-[63px] border-2 border-r-[3px] border-black">
              <ul className={`w-[74px] overflow-hidden border-2 pl-0.5 ${DOWN}`}>
                <li className="mt-0.5 h-[17px] w-16 bg-black leading-[17px] text-[#9bdada]">Spacing</li>
                <li>Rout</li>
                <li>Feature</li>
              </ul>
              <ScrollBar vertical tone="cyan" className="ml-1" />
              <label className="flex min-w-0 flex-1 flex-col border-l border-black px-[3px]">
                <span className="text-center">Resolution</span>
                <span className="mt-[5px] pl-1">0.1</span>
                <input
                  type="range"
                  defaultValue={0}
                  className={`mt-px h-[14px] w-full appearance-none border-2 bg-[#84b9b9] ${DOWN} [&::-webkit-slider-thumb]:h-[10px] [&::-webkit-slider-thumb]:w-[29px] [&::-webkit-slider-thumb]:appearance-none [&::-webkit-slider-thumb]:border-2 [&::-webkit-slider-thumb]:border-t-[#d4f6f4] [&::-webkit-slider-thumb]:border-l-[#d4f6f4] [&::-webkit-slider-thumb]:border-b-[#4f7f80] [&::-webkit-slider-thumb]:border-r-[#4f7f80] [&::-webkit-slider-thumb]:bg-linear-to-r [&::-webkit-slider-thumb]:from-[#9bdada] [&::-webkit-slider-thumb]:to-[#9bdada]`}
                />
              </label>
            </div>
          </div>
        </div>
        <div className="flex h-[9px] items-center pr-2.5">
          <span className="h-0.5 flex-1 border-y border-t-[#24705d] border-b-[#a9efdd]"></span>
          <span className={`size-[9px] border-2 ${GREEN_UP}`}></span>
        </div>
        <div className={`mx-[3px] border-[3px] ${GREEN_DOWN}`}>
          <svg viewBox="0 0 455 158" className="h-[158px] w-full">
            <path d="M150 20h127v24h25v66h-25v30H150z" fill="#9bdada" stroke="#000" strokeWidth="2" />
            <path d="M241 54h3v1h1v3h-4zM197 101h3v3h-3zM242 98h3v5h-3z" fill="#e010e0" />
            <path d="M240.500 103v-4h3M244 103h3v-3" fill="none" stroke="#000" />
          </svg>
        </div>
        <div className="flex h-11 items-center gap-[5px] px-[5px]">
          <LampButton word="DEL" fill="#f01818" tall />
          <LampButton word="REF" fill="#18e828" tall />
          <p className="-mx-0.5 h-[41px] flex-1 border border-black bg-[#9bdada] pl-0.5 leading-[39px]">78 measurements for 4 layers</p>
          {["Send to editor", "Fetch from editor"].map((name, i) => (
            <button key={name} aria-label={name} className={`flex h-[37px] w-[38px] items-center justify-center border-[3px] bg-[#9bdada] ${UP}`}>
              <Pic>
                <rect x={i ? 5 : 4} y="4" width="12" height="12" fill="#fff" stroke="#1010e8" strokeWidth="2" />
                <path d={i ? "M6 15v-5l2 3 2-4 2 2 4-6v10z" : "M5 15v-5l2 3 2-4 2 2 4-6v10z"} fill="#f01010" />
                <rect x="19" y="19.500" width="7" height="7" fill="none" stroke="#1010e8" strokeWidth="2" />
                <path d={i ? "M17 25H8v-5m-2 2l2-2 2 2" : "M19 7h5v8m-2-2l2 2 2-2"} fill="none" stroke="#000" />
              </Pic>
            </button>
          ))}
        </div>
        <div className="mt-0.5 border-t border-black bg-[#9bdada] px-px py-px">
          <button className={`h-[25px] w-full border-[3px] text-center leading-[18px] ${UP}`}>Close</button>
        </div>
      </div>
    </section>
  );
}

function Runner({ cut, frame }: { cut?: boolean; frame?: boolean }) {
  return (
    <button aria-label="Run checklist" className={`flex size-[29px] items-center justify-center border-[3px] bg-[#54cfb0] ${GREEN_UP}`}>
      <svg viewBox="0 0 22 22" className="size-[22px] bg-black" fill="none" stroke="#6fe0c4" strokeWidth="2">
        <circle cx="16" cy="4" r="1.500" fill="#6fe0c4" />
        <path d="M14 6l-5 6 5 3-2 5M13 7l3 4 4-1M9 12l-3 6-3 1M13 7L8 8l-2 3" />
        <path d="M3 5h3M8 4h3M2 8h2" strokeWidth="1" />
        {cut && <path d="M14 18l6-6m-5 0l4 6" stroke="#f01818" strokeWidth="1.200" />}
        {frame && <path d="M2 1h6v3h6V1h6v20H2z" stroke="#f01818" strokeWidth="1.200" />}
      </svg>
    </button>
  );
}

function ChecklistPanel() {
  return (
    <section className="absolute bottom-[39px] right-0 z-10 flex h-[559px] w-[522px] flex-col rounded-t-lg border border-[#999] bg-black pl-2 pr-2.5">
      <div className="-ml-2 -mr-2.5 h-[31px] rounded-t-lg bg-linear-to-b from-[#dfe9e6] via-[#a9b4b2] to-[#101010] pr-1.5">
        <button aria-label="Close window" className="ml-auto block h-[19px] w-[47px] rounded-b border border-t-0 border-[#999] bg-white/40 text-[13px] font-bold leading-[17px] text-[#888]">✕</button>
      </div>
      <div className={`flex min-h-0 flex-1 flex-col bg-[#9bdada] text-[15px] leading-[21px] ${MONO}`}>
        <div className="flex items-center gap-1 border-t-2 border-black p-0.5">
          <div className={`h-8 flex-1 border-2 ${DOWN}`}></div>
          <button aria-label="Help" className={`flex size-[30px] items-center justify-center border-[3px] ${UP}`}>
            <svg viewBox="0 0 22 24" className="h-6 w-[22px]"><rect x="1" y="0.5" width="20" height="23" fill="none" stroke="#000" /><text x="11" y="20" fontSize="21" fontWeight="bold" textAnchor="middle" fontFamily="Liberation Sans">?</text></svg>
          </button>
        </div>
        <div className="mt-[26px] flex flex-col gap-1 pr-3 font-bold">
          {["Width", "Length"].map((name) => (
            <label key={name} className="flex items-center justify-end gap-1 leading-[19px]">
              <input aria-label={name} className={`h-[19px] w-24 border-2 ${DOWN}`} />
              ml
            </label>
          ))}
        </div>
        <div className="mt-auto pl-px">
          <p className="pl-[57px] font-bold">Apply to:</p>
          <div className="flex pl-[6px]">
            <Diamond name="apply" label="All" checked className="w-[99px]" />
            <Diamond name="apply" label="Selected" />
          </div>
          <p className="font-bold">Check Missing Pads for Drills :</p>
          <div className="flex gap-[10px] pl-[6px]">
            <Diamond name="missing" label="Yes" checked />
            <Diamond name="missing" label="No" />
          </div>
          <p className="pl-12 font-bold">Use Compensated Rout :</p>
          <div className="flex pl-[6px]">
            <Diamond name="comp" label="Yes" className="w-[99px]" />
            <Diamond name="comp" label="No" checked className="w-[99px]" />
            <Diamond name="comp" label="Skeleton" />
          </div>
          <p className="font-bold">Sort Spacing by Solder Mask</p>
          <div className="flex gap-[10px] pl-[6px]">
            <Diamond name="sort" label="Yes" />
            <Diamond name="sort" label="No" checked />
          </div>
        </div>
        <button className={`mt-1 ml-[169px] h-[23px] w-[166px] border-2 text-[14px] font-bold leading-[18px] ${UP} ${SERIF}`}>Ranges...</button>
        <div className="flex h-9 items-center pl-1 pt-0.5">
          <div className="flex gap-[5px]">
            <Runner />
            <Runner cut />
            <Runner frame />
          </div>
          <p className="flex-1 text-center leading-[15px]">
            21 Jan 2025
            <br />
            06:06 PM - 0:00:48
          </p>
          <div className="flex items-center gap-1">
            <button aria-label="Units" className={`flex size-[29px] items-center justify-center border-[3px] ${UP}`}>
              <svg viewBox="0 0 22 22" className="size-[22px]" fill="none" stroke="#000"><path d="M.5.500h21v21H.5z" /><path d="M6 4v9q0 4 5 4t5-4V4" strokeWidth="3" /></svg>
            </button>
            <button aria-label="Find" className={`flex size-[29px] items-center justify-center border-[3px] bg-[#54cfb0] ${GREEN_UP}`}>
              <svg viewBox="0 0 22 22" className="size-[22px]" fill="none" stroke="#000"><path d="M.5.500h21v21H.5z" /><circle cx="9" cy="9" r="6" fill="#9bdada" /><path d="M9 6v6M6 9h6" /><path d="M13 13l7 7" strokeWidth="3" /></svg>
            </button>
            <button className="h-[34px] w-4 border border-black bg-[#ff1a1a] font-bold text-[#500]">‼</button>
          </div>
        </div>
        <p className="h-[17px] shrink-0 border-t border-black bg-[#ffffcc] pl-1 leading-[20px]">4 layers were processed</p>
      </div>
    </section>
  );
}

const taskIcons: [string, ReactNode][] = [
  ["Shell", <><path d="M9 26L3 20Q0 9 8 6l4-3 5 1 5-1 4 4q7 6 4 14l-7 6z" fill="#fbdca0" stroke="#e79a3c" /><path d="M15 26L6 9M15 26L12 4M15 26l7-22M15 26L3 15M15 26L28 11" stroke="#e8b060" /><path d="M19 12l3 6 6 1-4 4 1 6-6-3-6 3 1-6-4-4 6-1z" fill="#f07818" stroke="#d86010" /></>],
  ["Notes", <><rect x="5" y="2" width="23" height="28" fill="#e8f8ff" rx="1" /><path d="M8 7h17M8 12h17M8 17h17M8 22h17M8 26h17" stroke="#3cb4e8" strokeWidth="2.500" /></>],
  ["Project P", <><path d="M6 28V3h19" stroke="#0a7a3a" strokeWidth="2" fill="none" /><path d="M10 30q4-6 4-21h7q8 0 7 7t-10 7l-2 7z" fill="#0c8a44" /></>],
  ["Project F", <><path d="M6 28V3h19" stroke="#0a7a3a" strokeWidth="2" fill="none" /><path d="M10 30q4-6 4-21h7q8 0 7 7t-10 7l-2 7z" fill="#0c8a44" /><path d="M9 27V11h13M10 18h9" stroke="#a8d8c0" strokeWidth="1.500" fill="none" /></>],
  ["G tool", <path d="M29 2l-3 7h-9l-6 9 2 7h7l2-5h-5l2-4h10l-4 12-4 3H8l-5-6 3-14 8-7z" fill="#e82010" />],
  ["Disk", <><rect x="2" y="1" width="28" height="30" fill="#1838c8" rx="1" /><rect x="9" y="1" width="13" height="12" fill="#dde" /><path d="M17 3h4v8h-4z" fill="#1838c8" /><rect x="5" y="16" width="22" height="14" fill="#fff" /><path d="M7 19h18M7 23h12M7 27h9" stroke="#e04050" /><text x="18" y="29" fontSize="7" fontWeight="bold">64</text></>],
  ["Messenger", <><rect x="2" y="3" width="28" height="27" rx="7" fill="#1499f5" /><path d="M10 6q10 4 13 9l-3 6h3l-8 7 1-5q-5-2-5-6-2-5-1-11z" fill="#fff" /></>],
  ["Excel", <><path d="M3 4l5-3h18v28H3z" fill="#e8f2e0" stroke="#6ea95a" /><path d="M14 18h14v12H14z" fill="#fff" stroke="#4a9a4a" /><path d="M14 24h14M21 18v12" stroke="#4a9a4a" /><path d="M9 8l10 12M19 8L8 20" stroke="#2c7a2c" strokeWidth="3" /></>],
  ["Word", <><path d="M3 4l5-3h18v28H3z" fill="#d8e8fa" stroke="#7a9ac8" /><path d="M13 5h16v24H13z" fill="#fff" stroke="#98a8c8" /><path d="M15 20h12M15 24h12" stroke="#88a" /><path d="M8 8l3 10 4-8 3 8 4-10" fill="none" stroke="#2350a8" strokeWidth="2.500" /></>],
  ["Genesis", <><circle cx="10" cy="7" r="4" fill="#0aa" /><ellipse cx="17" cy="18" rx="14" ry="10" fill="#186a78" /><ellipse cx="17" cy="17" rx="9" ry="6" fill="#40d8c8" /><ellipse cx="17" cy="17" rx="5" ry="3" fill="#0b5560" /><path d="M13 17l4 2 4-3" stroke="#e8d840" strokeWidth="2" fill="none" /><path d="M6 26l5-3M24 26l4-4" stroke="#fff" strokeWidth="2" /></>],
  ["Genesis 2", <><circle cx="10" cy="7" r="4" fill="#0aa" /><ellipse cx="17" cy="18" rx="14" ry="10" fill="#2a8a88" /><ellipse cx="17" cy="17" rx="9" ry="6" fill="#40d8c8" /><ellipse cx="17" cy="17" rx="5" ry="3" fill="#0b5560" /><path d="M13 17l4 2 4-3" stroke="#e8d840" strokeWidth="2" fill="none" /></>],
  ["X server", <><path d="M3 3h8l18 26h-8z" fill="#7a1888" stroke="#fff" /><path d="M28 3L5 29" stroke="#fff" strokeWidth="3" /><path d="M28 3L5 29" stroke="#7a1888" /></>],
];

function Taskbar() {
  return (
    <footer className={`relative z-30 flex h-10 shrink-0 items-center border-t border-[#9ab] bg-linear-to-r from-[#0c2a58] via-[#16386e] via-70% to-[#7f9cc4] to-75% ${UI}`}>
      <button aria-label="Start" className="ml-2 mr-[15px]">
        <svg viewBox="0 0 38 38" className="size-[37px]">
          <circle cx="19" cy="19" r="18" fill="#2f78b8" stroke="#9fd0ee" />
          <ellipse cx="19" cy="11" rx="14" ry="9" fill="#a8cce4" opacity="0.5" />
          <path d="M11 12q4-3 8 0l-2 7q-3-2-7 0z" fill="#f0642c" />
          <path d="M20 12q4 2 8 0l-2 7q-4 2-7 0z" fill="#92c83e" />
          <path d="M10 20q3-2 7 0l-2 7q-3-2-7 0z" fill="#3aa0e8" />
          <path d="M18 21q4 2 8 0l-2 7q-4 2-7 0z" fill="#fcc82c" />
        </svg>
      </button>
      <div className="flex gap-1">
        {taskIcons.map(([name, pic], i) => (
          <span key={name} className="flex w-[58px]">
            <button
              aria-label={name}
              className={`flex h-[37px] flex-1 items-center justify-center rounded border border-[#8ea6c6] ${i === 11 ? "bg-linear-to-b from-[#b8bccc] to-[#8890a8]" : "bg-linear-to-br from-[#8296b4] via-[#3c5884] to-[#24447a]"}`}
            >
              <svg viewBox="0 0 32 32" className="size-[31px]">{pic}</svg>
            </button>
            {(name === "Excel" || name === "X server") && (
              <>
                <span className="h-[37px] w-1 rounded-r border-y border-r border-[#8ea6c6]"></span>
                <span className="h-[37px] w-1 rounded-r border-y border-r border-[#8ea6c6]"></span>
              </>
            )}
          </span>
        ))}
      </div>
      <div className="ml-auto flex items-center gap-3 text-white">
        <svg viewBox="0 0 170 24" className="h-6 w-[170px]">
          <rect x="8" y="9" width="15" height="9" fill="#ccc" stroke="#555" />
          <path d="M10 12h11M10 15h11" stroke="#555" strokeDasharray="2 1" />
          <circle cx="37" cy="11" r="7.500" fill="#1428b8" stroke="#ccd" />
          <text x="37" y="15" fontSize="12" fontWeight="bold" textAnchor="middle" fill="#fff">?</text>
          <path d="M56 5h5v3h-5zM58 3h5v3" fill="none" stroke="#fff" />
          <path d="M57 16h5l-2.500 3zM74 16h8l-4-4z" fill="#fff" />
          <path d="M95 20L107 6l-1 13z" fill="#e02020" />
          <path d="M106 10l4 9h-4z" fill="#20d040" />
          <path d="M126 6v15M127 7h10v8h-10z" stroke="#fff" strokeWidth="2" fill="#dde" />
          <circle cx="136" cy="16" r="5" fill="#e02818" />
          <path d="M134 14l4 4m0-4l-4 4" stroke="#fff" strokeWidth="1.500" />
          <path d="M154 8h10v9h-10zM151 5v8M156 20h8" fill="#456" stroke="#fff" strokeWidth="1.500" />
        </svg>
        <time className="w-[66px] text-center text-[12px] leading-[18px]">
          18:10
          <br />
          2025/1/21
        </time>
        <button aria-label="Show desktop" className="h-[39px] w-3 border-l border-[#ccd] bg-[#46648e]"></button>
      </div>
    </footer>
  );
}

export default function App() {
  return (
    <div className="relative flex h-screen flex-col overflow-hidden bg-black text-black">
      <div className={`flex h-[22px] shrink-0 items-center border-b border-[#b8cce0] bg-linear-to-r from-[#8ea6c2] via-[#0d3a78] via-30% to-[#0c2f6a] text-[12px] ${UI}`}>
        <XIcon />
        <span className="ml-1.5 whitespace-pre rounded-full bg-white/25 pr-2 leading-4 [text-shadow:0_0_6px_#fff]">Graphic Editor 9.07b2 (00@HY-HYCAM-PC411 - Windows, pid:5452)</span>
        {/* desktop icons showing through the glass */}
        <div className="ml-auto mr-[232px] flex h-full items-end gap-8 overflow-hidden blur-[3px]">
          <span className="h-3 w-11 rounded-t-full bg-[#8cbcf0]"></span>
          <span className="h-3 w-11 rounded-t-full bg-[#8cbcf0]"></span>
          <span className="h-3 w-11 rounded-t-full bg-[#8cbcf0]"></span>
        </div>
        <div className="mr-1 flex h-[19px] self-start rounded-b border border-t-0 border-[#8fa8c8] text-white">
          <button aria-label="Minimize" className="w-7 border-r border-[#8fa8c8]"><svg viewBox="0 0 28 18" className="h-[18px]"><path d="M9 8h10v3H9z" fill="#fff" /></svg></button>
          <button aria-label="Restore" className="w-7 border-r border-[#8fa8c8]"><svg viewBox="0 0 28 18" className="h-[18px]"><path d="M9 5h8v7H9zM12 4V3h8v7h-2" fill="none" stroke="#fff" strokeWidth="2" /></svg></button>
          <button aria-label="Close" className="w-[46px] text-[13px] font-bold leading-[15px]">✕</button>
        </div>
      </div>
      <Header />
      <main className="flex min-h-0 flex-1">
        <Sidebar />
        <Canvas />
        <Toolbar />
      </main>
      <PromptBar />
      <div className="h-8 shrink-0 bg-[#5d9090] p-0.5">
        <div className="h-full border border-black bg-[#b4ffff] p-0.5">
          <div className="h-full border-2 border-t-[#dcffff] border-l-[#dcffff] border-b-[#5d9090] border-r-[#5d9090]"></div>
        </div>
      </div>
      <ResultsViewer />
      <ChecklistPanel />
      <ResultsHistogram />
      <Taskbar />
    </div>
  );
}
